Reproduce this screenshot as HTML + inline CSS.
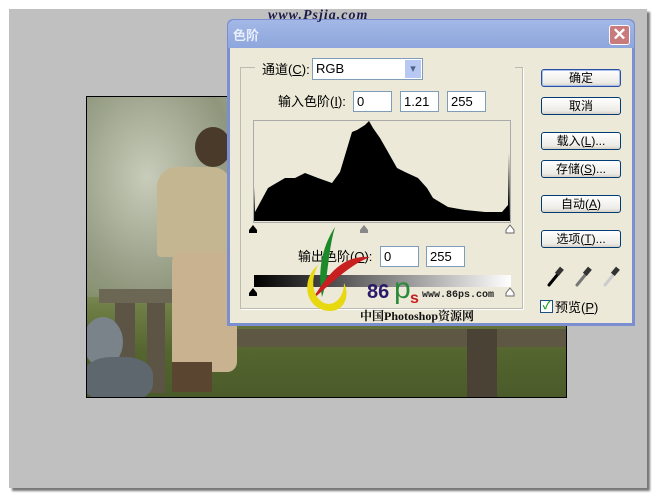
<!DOCTYPE html>
<html><head><meta charset="utf-8"><style>
*{margin:0;padding:0;box-sizing:border-box}
body{width:660px;height:500px;background:#fff;position:relative;overflow:hidden;font-family:"Liberation Sans","Noto Sans CJK SC",sans-serif;font-size:12px;color:#000}
.a{position:absolute}
.inp{position:absolute;background:#fff;border:1px solid #7f9db9;height:21px;font-size:13px;padding:2px 3px;line-height:15px}
.btn{position:absolute;left:541px;width:80px;height:18px;border:1px solid #003c74;border-radius:3px;background:linear-gradient(#fff,#ecebe6 80%,#d6d0c5);text-align:center;font-size:12px;line-height:16px}
.u{text-decoration:underline}
</style></head><body>
<div class="a" style="left:9px;top:9px;width:638px;height:479px;background:#c0c0c0;box-shadow:3px 3px 2px #777"></div>
<!-- photo -->
<div class="a" style="left:86px;top:96px;width:481px;height:302px;border:1px solid #000;overflow:hidden;background:linear-gradient(180deg,#a6ab95 0%,#b8bca8 30%,#9aa281 55%,#6f7e45 70%,#55652f 85%,#4a5a2a 100%)">
 <div class="a" style="left:0;top:0;width:150px;height:200px;background:radial-gradient(ellipse at 40% 40%,#c8ccba,#8e967c 70%,transparent)"></div>
 <div class="a" style="left:12px;top:192px;width:190px;height:14px;background:#6c6655"></div>
 <div class="a" style="left:28px;top:206px;width:20px;height:90px;background:#5c5445"></div>
 <div class="a" style="left:60px;top:206px;width:18px;height:90px;background:#5c5445"></div>
 <div class="a" style="left:90px;top:232px;width:390px;height:18px;background:#5e5744"></div>
 <div class="a" style="left:380px;top:232px;width:30px;height:70px;background:#4a4234"></div>
 <div class="a" style="left:-4px;top:220px;width:40px;height:50px;border-radius:50%;background:#7a828a"></div>
 <div class="a" style="left:-4px;top:260px;width:70px;height:45px;border-radius:40%;background:#5e666e"></div>
 <div class="a" style="left:70px;top:70px;width:75px;height:90px;background:#c4b690;border-radius:20px 20px 4px 4px"></div>
 <div class="a" style="left:108px;top:30px;width:36px;height:40px;border-radius:50%;background:#4a3a2a"></div>
 <div class="a" style="left:85px;top:155px;width:65px;height:120px;background:#c8b290;border-radius:10px"></div>
 <div class="a" style="left:85px;top:265px;width:40px;height:30px;background:#5a4530"></div>
</div>
<!-- dialog -->
<div class="a" style="left:227px;top:19px;width:408px;height:307px;background:#7b8fd0;border-radius:6px 6px 0 0"></div>
<div class="a" style="left:228px;top:20px;width:406px;height:28px;background:linear-gradient(#a3b8e6,#8ea6dc);border-radius:6px 6px 0 0"></div>
<div class="a" style="left:233px;top:25px;color:#e8eefc;font-size:13px;font-weight:bold">色阶</div>
<div class="a" style="left:609px;top:25px;width:21px;height:20px;border:1px solid #fff;border-radius:3px;background:#c87a7c;color:#fff;font-size:17px;line-height:17px;text-align:center;font-weight:bold">✕</div>
<div class="a" style="left:230px;top:48px;width:402px;height:275px;background:#ece9d8"></div>
<div class="a" style="left:240px;top:67px;width:283px;height:242px;border:1px solid #bdbab0;box-shadow:1px 1px 0 #fff"></div>
<div class="a" style="left:255px;top:60px;height:18px;background:#ece9d8;width:260px"></div>
<div class="a" style="left:262px;top:59px;font-size:13px">通道(<span class="u">C</span>):</div>
<div class="inp" style="left:312px;top:58px;width:111px;height:22px">RGB</div>
<div class="a" style="left:405px;top:60px;width:16px;height:18px;background:#b7c8f3;color:#4d6185;text-align:center;font-size:11px;line-height:18px">▾</div>
<div class="a" style="left:278px;top:91px;font-size:13px">输入色阶(<span class="u">I</span>):</div>
<div class="inp" style="left:353px;top:91px;width:39px">0</div>
<div class="inp" style="left:400px;top:91px;width:39px">1.21</div>
<div class="inp" style="left:447px;top:91px;width:39px">255</div>
<svg class="a" style="left:253px;top:120px" width="258" height="103" viewBox="-1 -1 258 103">
<rect x="-0.5" y="-0.5" width="257" height="102" fill="#ece9d8" stroke="#aaa"/>
<polygon fill="#000" points="0,100 0.3,66 1,91 14,67 19,64 31,57 41,57 51,52 64,57 78,62 86,51 98,11 103,9 111,4 115,0 119,7 126,17 134,31 143,47 151,51 164,57 173,67 179,77 194,86 211,89 231,91 248,91 254,84 255,32 256,100"/>
</svg>
<svg class="a" style="left:249px;top:223px" width="270" height="12"><path d="M4,2 L8,7 V10 H0 V7Z" fill="#000"/><path d="M115,2 L119,7 V10 H111 V7Z" fill="#888"/><path d="M261,2 L265,7 V10 H257 V7Z" fill="#fff" stroke="#666"/></svg>
<div class="a" style="left:298px;top:246px;font-size:13px">输出色阶(<span class="u">O</span>):</div>
<div class="inp" style="left:380px;top:246px;width:39px">0</div>
<div class="inp" style="left:426px;top:246px;width:39px">255</div>
<div class="a" style="left:254px;top:275px;width:257px;height:12px;background:linear-gradient(90deg,#000,#fff)"></div>
<svg class="a" style="left:249px;top:286px" width="270" height="12"><path d="M4,2 L8,7 V10 H0 V7Z" fill="#000"/><path d="M261,2 L265,7 V10 H257 V7Z" fill="#fff" stroke="#666"/></svg>
<div class="btn" style="top:69px;border-color:#2a4f9e;box-shadow:inset 0 0 0 1px #a8c0ee">确定</div>
<div class="btn" style="top:97px">取消</div>
<div class="btn" style="top:132px">载入(<span class="u">L</span>)...</div>
<div class="btn" style="top:160px">存储(<span class="u">S</span>)...</div>
<div class="btn" style="top:195px">自动(<span class="u">A</span>)</div>
<div class="btn" style="top:230px">选项(<span class="u">T</span>)...</div>
<svg class="a" style="left:545px;top:264px" width="80" height="24">
<g stroke-width="3" stroke-linecap="round"><path d="M4,21 L13,10" stroke="#000"/><path d="M32,21 L41,10" stroke="#777"/><path d="M60,21 L69,10" stroke="#ccc"/></g>
<g fill="#333"><rect x="12" y="3" width="5" height="8" transform="rotate(40 14 7)"/><rect x="40" y="3" width="5" height="8" transform="rotate(40 42 7)"/><rect x="68" y="3" width="5" height="8" transform="rotate(40 70 7)"/></g>
</svg>
<div class="a" style="left:540px;top:300px;width:13px;height:13px;border:1px solid #1c5180;background:#fff;color:#21a121;font-size:11px;line-height:11px;text-align:center;font-weight:bold">✓</div>
<div class="a" style="left:555px;top:297px;font-size:13px">预览(<span class="u">P</span>)</div>
<!-- watermarks -->
<div class="a" style="left:268px;top:8px;font-family:'Liberation Serif',serif;font-style:italic;font-weight:bold;font-size:14px;color:#1a1a4a;letter-spacing:1px">www.Psjia.com</div>
<svg class="a" style="left:300px;top:225px" width="70" height="90">
<path d="M35,2 C20,25 18,50 22,72 C28,55 28,25 35,2Z" fill="#1c8a2a"/>
<path d="M70,32 C45,30 30,45 12,75 C35,55 50,40 70,32Z" fill="#c82020"/>
<path d="M18,40 C0,55 5,85 30,86 C45,86 50,70 44,58 C44,72 35,82 24,78 C12,72 10,55 18,40Z" fill="#e8d810"/>
</svg>
<div class="a" style="left:367px;top:281px;font-size:20px;font-weight:bold;color:#2a1a6a">86</div>
<div class="a" style="left:394px;top:272px;font-size:30px;color:#2a8a3a;font-family:'Liberation Sans',sans-serif">p</div>
<div class="a" style="left:410px;top:290px;font-size:16px;color:#c82020;font-weight:bold">s</div>
<div class="a" style="left:422px;top:290px;font-family:'Liberation Mono',monospace;font-size:10px;font-weight:bold;color:#222">www.86ps.com</div>
<div class="a" style="left:360px;top:307px;font-size:12px;color:#111;font-family:'Liberation Serif','Noto Serif CJK SC',serif;font-weight:bold">中国Photoshop资源网</div>
</body></html>
